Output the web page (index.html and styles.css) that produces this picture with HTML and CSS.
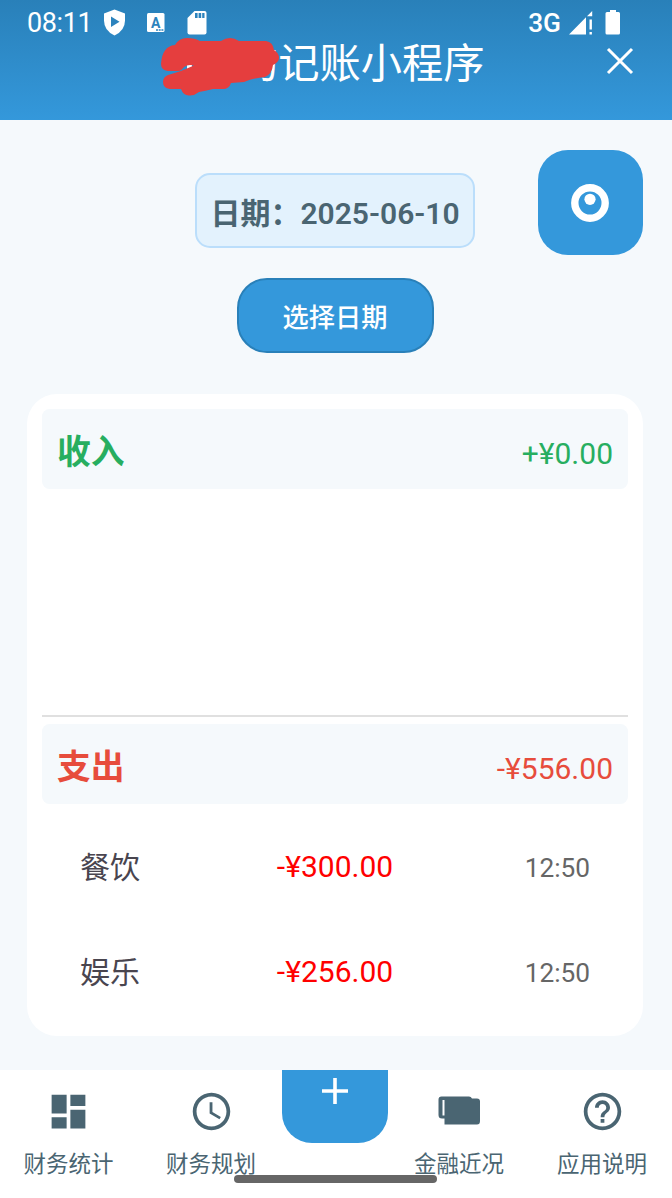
FILE: index.html
```html
<!DOCTYPE html>
<html lang="zh-CN">
<head>
    <meta charset="UTF-8">
    <meta name="viewport" content="width=device-width, initial-scale=1.0">
    <title>记账小程序</title>
    <link rel="stylesheet" href="styles.css">
</head>
<body>
    <header class="header">
        <div class="status-bar">
            <span class="clock">08:11</span>
            <svg class="status-icons" width="110" height="32" viewBox="0 0 110 32" fill="#fff">
                <path d="M14.5 9 L25 13 V20 Q25 30 14.5 35 Q4 30 4 20 V13Z" transform="translate(0 .5)"/>
                <path d="M11 16.5 V27 L19.5 21.8Z" fill="#2c83bd"/>
                <rect x="47" y="13" width="17.5" height="19" rx="1.5"/>
                <text class="badge-letter" x="51" y="27.500">A</text>
                <path d="M56 30 H63.5" stroke="#2c83bd" stroke-width="1.5" stroke-dasharray="2 .7"/>
                <path d="M94.5 11 H104.500 Q106.500 11 106.500 13 V32.500 Q106.500 34.500 104.500 34.500 H89.500 Q87.500 34.500 87.500 32.500 V18Z"/>
                <path d="M95 13 h2.600 v5 h-2.600z M98.600 13 h2.600 v5 h-2.600z M102.200 13 h2.300 v5 h-2.300z" fill="#2c83bd"/>
            </svg>
            <span class="network">3G</span>
            <svg class="status-icons" width="54" height="32" viewBox="0 0 54 32" fill="#fff">
                <path d="M1 34.500 L18 17.200 V34.500Z M19 16.200 L24.200 11 V16.200Z M21.500 19.500 h2.400 v10 h-2.400z M21.500 32 h2.400 v2.500 h-2.400z"/>
                <path d="M42 10 h6 v2 h2.500 q1.500 0 1.500 1.500 v19.500 q0 1.500 -1.500 1.500 h-11.500 q-1.500 0 -1.500 -1.500 v-19.500 q0 -1.500 1.500 -1.500 h3z"/>
            </svg>
        </div>
        <div class="title-bar">
            <h1 class="title">的记账小程序</h1>
            <svg class="close" width="28" height="28" viewBox="0 0 28 28">
                <path d="M2 2 L26 26 M26 2 L2 26" stroke="#fff" stroke-width="3"/>
            </svg>
        </div>
        <svg class="scribble" width="120" height="60" viewBox="160 36 120 60">
            <path d="M187 65 h5 v4 h-5z" fill="#fff"/>
            <path d="M161 64 C162 52 166 46 175 45 Q179 38 187 38 Q195 38 200 41 H221 Q230 35 239 41 H266 Q273 42 274 50 Q279 53 279 58 Q279 62 273 65 Q272 74 265 77 Q254 78 244 82 L231 83 Q229 89 223 89 H213 Q205 91 199 92 Q194 96 189 95.500 Q183 95 181 89 H170 Q163 88 163 82 Q163 77 168 75 L181 71 L194 65.500 Q188 64 184 67 Q181 71 178 71 H168 Q161 70 161 64Z" fill="#e53e3e"/>
        </svg>
    </header>

    <main class="main">
        <div class="date-box">日期：2025-06-10</div>
        <button class="record-btn">
            <svg width="39" height="38" viewBox="0 0 39 38">
                <circle cx="19" cy="19" r="15.200" fill="none" stroke="#fff" stroke-width="7.400"/>
                <circle cx="19" cy="15.300" r="5.600" fill="#fff"/>
            </svg>
        </button>
        <button class="date-btn">选择日期</button>

        <section class="card">
            <div class="card-head income">
                <h2>收入</h2>
                <span>+¥0.00</span>
            </div>
            <div class="income-list"></div>
            <div class="card-head expense">
                <h2>支出</h2>
                <span>-¥556.00</span>
            </div>
            <ul class="list">
                <li><span class="name">餐饮</span><span class="amount">-¥300.00</span><span class="time">12:50</span></li>
                <li><span class="name">娱乐</span><span class="amount">-¥256.00</span><span class="time">12:50</span></li>
            </ul>
        </section>
    </main>

    <nav class="nav">
        <a class="nav-item">
            <svg width="45" height="45" viewBox="0 0 24 24"><path d="M3 13h8V3H3v10zm0 8h8v-6H3v6zm10 0h8V11h-8v10zm0-18v6h8V3h-8z"/></svg>
            <span>财务统计</span>
        </a>
        <a class="nav-item">
            <svg width="45" height="45" viewBox="0 0 24 24"><path d="M11.990 2C6.470 2 2 6.480 2 12s4.470 10 9.990 10C17.520 22 22 17.520 22 12S17.520 2 11.990 2zM12 20c-4.420 0-8-3.580-8-8s3.580-8 8-8 8 3.580 8 8-3.580 8-8 8zm.500-13H11v6l5.250 3.150.750-1.230-4.500-2.670z"/></svg>
            <span>财务规划</span>
        </a>
        <button class="add-btn">
            <svg width="28" height="28" viewBox="0 0 28 28"><path d="M14 1 V27 M1 14 H27" stroke="#fff" stroke-width="3.600"/></svg>
        </button>
        <a class="nav-item">
            <svg width="45" height="45" viewBox="0 0 45 45">
                <path d="M4.500 7.500 H32 Q34 7.500 35 9.500 H40 Q43 9.500 43 12.500 V32 Q43 35.500 40 35.500 H7.500 V29.500 H5 Q1.500 29.500 1.500 26 V10.500 Q1.500 7.500 4.500 7.500Z"/>
                <path d="M5.500 11 h2 v15.500 h-2z" fill="#fff"/>
            </svg>
            <span>金融近况</span>
        </a>
        <a class="nav-item">
            <svg width="45" height="45" viewBox="0 0 24 24"><path d="M11 18h2v-2h-2v2zm1-16C6.480 2 2 6.480 2 12s4.480 10 10 10 10-4.480 10-10S17.520 2 12 2zm0 18c-4.410 0-8-3.590-8-8s3.590-8 8-8 8 3.590 8 8-3.590 8-8 8zm0-14c-2.210 0-4 1.790-4 4h2c0-1.100.900-2 2-2s2 .900 2 2c0 2-3 1.750-3 5h2c0-2.250 3-2.500 3-5 0-2.210-1.790-4-4-4z"/></svg>
            <span>应用说明</span>
        </a>
        <div class="gesture-bar"></div>
    </nav>
</body>
</html>
```
FILE: styles.css
```css
* {
    box-sizing: border-box;
}

body {
    margin: 0;
    height: 1198px;
    display: flex;
    flex-direction: column;
    overflow: hidden;
    font-family: Roboto, "Noto Sans CJK SC", sans-serif;
    background-color: #f5f9fc;
}

h1, h2, ul {
    margin: 0;
    padding: 0;
}

button {
    padding: 0;
    border: none;
    font-family: inherit;
    color: #fff;
    background-color: #3498db;
}

.header {
    position: relative;
    height: 120px;
    color: #fff;
    background: linear-gradient(#2980b9, #3498db);
}

.status-bar {
    display: flex;
    height: 38px;
    padding: 0 50px 0 27px;
    font-size: 27px;
    line-height: 46px;
}

.status-icons {
    overflow: visible;
}

.badge-letter {
    font-size: 14px;
    font-weight: 700;
    fill: #2c83bd;
}

.clock {
    width: 73px;
    letter-spacing: -0.4px;
}

.network {
    margin-left: auto;
    margin-right: 7px;
    font-size: 26.25px;
    font-weight: 500;
}

.title-bar {
    display: flex;
    align-items: center;
    height: 52px;
    padding: 0 38px 0 237px;
}

.title {
    flex: 1;
    font-size: 41.25px;
    font-weight: 400;
    line-height: 52px;
    white-space: nowrap;
}

.close {
    margin-top: -7px;
}

/* red marker over the start of the title */
.scribble {
    position: absolute;
    left: 160px;
    top: 36px;
}

.main {
    display: grid;
    grid-template-columns: 1fr 280px 1fr;
    grid-template-rows: 105px 75px 642px;
    padding: 30px 29px 0 27px;
    height: 950px;
}

.date-box {
    grid-column: 2;
    height: 75px;
    margin-top: 23px;
    border: 2px solid #bbdefb;
    border-radius: 15px;
    font-size: 30px;
    font-weight: 600;
    line-height: 77px;
    text-align: center;
    white-space: nowrap;
    color: #4a6572;
    background-color: #e3f2fd;
}

.record-btn {
    grid-column: 3;
    justify-self: end;
    width: 105px;
    height: 105px;
    border-radius: 30px;
    display: flex;
    justify-content: center;
    align-items: center;
}

.date-btn {
    grid-column: 2;
    justify-self: center;
    width: 197px;
    height: 75px;
    margin-top: 23px;
    border: 2px solid #2980b9;
    border-radius: 30px;
    font-size: 26.25px;
    font-weight: 500;
}

.card {
    grid-column: 1 / 4;
    height: 642px;
    margin-top: 64px;
    padding: 15px;
    border-radius: 30px;
    background-color: #fff;
}

.card-head {
    display: flex;
    justify-content: space-between;
    align-items: center;
    height: 80px;
    padding: 0 15px;
    border-radius: 7.5px;
    font-size: 30px;
    line-height: 40px;
    background-color: #f5f9fc;
}

.card-head h2 {
    padding-top: 8px;
    font-size: 33.75px;
    font-weight: 700;
}

.card-head span {
    padding-top: 10px;
}

.income {
    color: #27ae60;
}

.income-list {
    height: 228px;
    margin-bottom: 7px;
    border-bottom: 2px solid #e0e0e0;
}

.expense {
    color: #e74c3c;
}

.list {
    padding-top: 10px;
    list-style-type: none;
}

.list li {
    display: grid;
    grid-template-columns: 1fr 1fr 1fr;
    align-items: center;
    height: 105px;
    padding: 0 38px;
    font-size: 30px;
    color: #49454f;
}

.list .name {
    padding-bottom: 4px;
}

.list .amount {
    text-align: center;
    color: #f00;
}

.list .time {
    padding-top: 2px;
    text-align: right;
    font-size: 26.25px;
    color: #666;
}

.nav {
    position: relative;
    display: grid;
    grid-template-columns: 137px 148px 100px 148px 138px;
    height: 128px;
    background-color: #fff;
}

.nav-item {
    display: flex;
    flex-direction: column;
    align-items: center;
    padding-top: 19px;
    font-size: 22.5px;
    line-height: 30px;
    color: #4a6572;
    fill: #4a6572;
}

.nav-item span {
    margin-top: 15px;
}

.add-btn {
    width: 106px;
    height: 73px;
    margin-left: -3px;
    padding-top: 7px;
    border-radius: 0 0 30px 30px;
    display: flex;
    justify-content: center;
}

.gesture-bar {
    position: absolute;
    left: 234px;
    bottom: 15px;
    width: 203px;
    height: 8px;
    border-radius: 4px;
    background-color: #666;
}
```
